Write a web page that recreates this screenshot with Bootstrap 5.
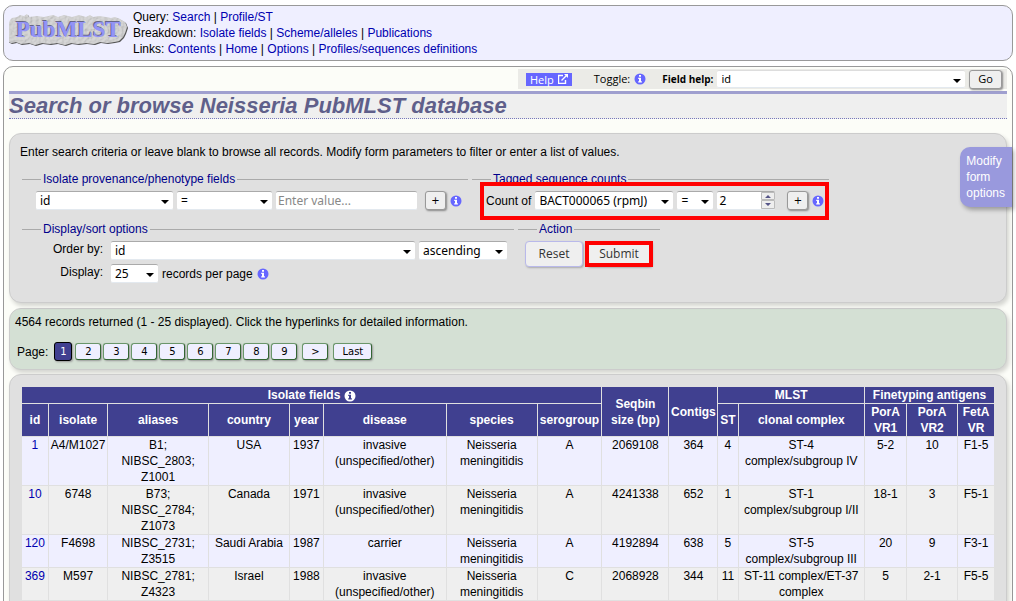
<!DOCTYPE html>
<html lang="en">
<head>
<meta charset="utf-8">
<meta name="viewport" content="width=device-width, initial-scale=1">
<title>PubMLST - Neisseria</title>
<link href="https://cdn.jsdelivr.net/npm/bootstrap@5.3.0/dist/css/bootstrap.min.css" rel="stylesheet">
<script src="https://cdn.jsdelivr.net/npm/bootstrap@5.3.0/dist/js/bootstrap.bundle.min.js" defer></script>
<style>
html,body{height:100%}
body{font:12px/16px "Liberation Sans",Arial,sans-serif;color:#000;background:#fff;overflow:hidden;padding:5px 3px 0}
a{color:#0000b0;text-decoration:none}
.site-head{background:#efefff;border:1px solid #999;border-radius:10px;padding:3px 5px}
.main-box{background:#fcfdf8;border:1px solid #999;border-radius:10px;margin-top:5px;padding:2px 5px 20px}
.helpbar{background:#ebebe7;font:11px/16px "Open Sans",sans-serif;width:49%;height:20px;margin-left:auto;padding:0 5px 0 8px}
.helpbar label{font-size:10px}
.help-link{background:#66f;color:#fff;padding:0 4px;line-height:13px;margin-right:22px}
.info{width:12px;height:12px;color:#66f;flex:none}
.title{font:italic bold 22px/24px "Liberation Sans",Arial,sans-serif;color:#5f5f8a;background:#efefef;border-top:3px solid #9f9fcf;border-bottom:1px dotted #77b;margin:2px 0 0}
.panel{border:1px solid #ccc;border-radius:12px;box-shadow:2px 3px 4px rgba(0,0,0,.16);background:#e0e0e0}
.query{margin-top:14px;padding:10px 10px 23px}
.query p{margin-bottom:11px}
.results{background:#d4e0d4;margin-top:5px;padding:5px 5px 8px}
.listing{margin-top:4px;padding:11px 11px 20px}
.sets{margin-left:2px}
fieldset{height:58px;margin:0;position:relative;border-top:1px solid #aaa}
legend{float:none;width:auto;font-size:12px;line-height:16px;height:16px;margin:0 0 4px 19px;padding:0 2px;color:#00008b}
.fields{padding-left:14px}
.ctl{font:12px/16px "Noto Sans",sans-serif;color:#000;border:0;border-top:1px solid #aaa;border-bottom:1px solid #e3e9ef;border-radius:2px;background:#fff;height:19px;padding:0 4px}
select.ctl{appearance:none;background:#fff url("data:image/svg+xml,%3Csvg xmlns='http://www.w3.org/2000/svg' viewBox='0 0 8 4'%3E%3Cpath d='M0 0h8L4 4z'/%3E%3C/svg%3E") no-repeat right 4px top 8px/8px 4px}
.helpbar .ctl{font-size:11px;height:18px;border-top-color:#ddd}
input.ctl{padding:0 2px;appearance:textfield}
input.ctl::-webkit-inner-spin-button{display:none}
.ctl::placeholder{color:#888}
.btn-mini{font:10px/14px "DejaVu Sans",sans-serif;border:1px solid #999;border-radius:3px;background:#efefef;color:#000;box-shadow:1px 1px 2px #888;height:19px;width:21px;padding:0}
.btn-go{font:11px/14px "Open Sans",sans-serif;width:33px}
.btn-act{font:12px/16px "Open Sans",sans-serif;color:#333;background:#efefef;border:1px solid #b9b9ea;border-radius:4px;box-shadow:1px 1px 2px #aaa;height:26px;padding:0}
.actions{gap:3px;padding-left:7px}
.w-reset{width:58px}.w-submit{width:66px}
.ring{border:4px solid red;position:absolute;pointer-events:none}
.ring-count{left:8px;right:0;top:-9px;height:38px}
.ring-submit{inset:0 -1px}
.tab{position:absolute;right:-6px;top:13px;padding:6px 7px 6px 6px;background:#99d;color:#fff;border-radius:10px 0 0 10px;box-shadow:2px 3px 4px rgba(0,0,0,.3)}
.pager{padding:4px 0 0 2px}
.pg{font:10px/14px "DejaVu Sans",sans-serif;background:#efefff;border:1px solid #6a966a;border-right-color:#363;border-bottom-color:#363;border-radius:3px;box-shadow:1px 1px 2px #999;height:17px;width:26px;padding:0;margin-right:2px;color:#000}
.pg.current{background:#404090;color:#fff;border-color:#000;width:18px;height:19px;margin:0 3px 0 6px}
.pg.jump{margin-left:3px}
.pg.final{width:39px}
.w-id{width:137px}.w-op{width:95px}.w-val{width:141px}.w-order{width:304px}.w-dir{width:88px}.w-num{width:47px}.w-locus{width:138px}.w-eq{width:36px}.w-count{width:58px}
.f-prov{width:446px}.f-tag{width:357px}.f-sort{width:492px}.f-act{width:142px}
.f-prov,.f-tag{height:50px}
.spin{position:absolute;right:0;top:1px}
.lbl{width:81px;text-align:right}
.records{width:100%;table-layout:fixed;border-collapse:separate;border-spacing:1px;text-align:center}
.records th,.records td{padding:0;line-height:16px;height:16px;vertical-align:top;white-space:nowrap}
.records th{background:#404090;color:#fff;vertical-align:middle;text-align:center}
.records tbody tr{background:#efefff}
.records tbody tr:nth-child(even){background:#efefef}
</style>
</head>
<body>
<svg width="0" height="0" class="position-absolute" aria-hidden="true">
<symbol id="info" viewBox="0 0 12 12"><circle cx="6" cy="6" r="5.500" fill="currentColor"/><path d="M5 2h2v1.700H5zM4.200 4.800H7v3.400h.9v1.300H4.200V8.200H5V6h-.8z" fill="#fff"/></symbol>
<symbol id="info-inv" viewBox="0 0 12 12"><circle cx="6" cy="6" r="5.500" fill="#fff"/><path d="M5 2h2v1.700H5zM4.200 4.800H7v3.400h.9v1.300H4.200V8.200H5V6h-.8z" fill="#404090"/></symbol>
</svg>

<header class="site-head d-flex">
<svg width="120" height="34" viewBox="0 0 120 34" class="flex-shrink-0 mt-1" role="img" aria-label="PubMLST">
<defs><filter id="stone" x="-5%" y="-10%" width="110%" height="125%"><feTurbulence type="fractalNoise" baseFrequency=".35" numOctaves="3" seed="4" result="n"/><feDiffuseLighting in="n" surfaceScale="1" lighting-color="#d8d8d8" result="l"><feDistantLight azimuth="225" elevation="68"/></feDiffuseLighting><feComposite in="l" in2="SourceGraphic" operator="in" result="t"/><feDropShadow in="t" dx="1" dy="1" stdDeviation=".5" flood-color="#555"/></filter></defs>
<path filter="url(#stone)" d="M1 7l2-2 5-1 3-2 4 1 3-2 2 3 8-1 7 1 9-2 5 2 6-2 8 2 7-2 7 2 4-2 3 2 6-1 7 1 5 1 4-1 5 2 5 3 2 5-2 6-2 4-4 4-5 1-7 1-7-1-6 2-8-1-8 1-7-1-6 2-8-2-7 1-8-1-7 2-6-2-8 1-5-2-5 1-4-2 2-4-3-4 1-5z"/>
<g font-family="'Liberation Serif',serif" font-weight="bold" font-size="23"><text x="6" y="23" fill="#66668a">PubMLST</text><text x="7" y="24" fill="#9393f6">PubMLST</text></g>
</svg>
<div class="ms-1">Query: <a href="#">Search</a> | <a href="#">Profile/ST</a><br>Breakdown: <a href="#">Isolate fields</a> | <a href="#">Scheme/alleles</a> | <a href="#">Publications</a><br>Links: <a href="#">Contents</a> | <a href="#">Home</a> | <a href="#">Options</a> | <a href="#">Profiles/sequences definitions</a></div>
</header>

<main class="main-box">
<form class="helpbar d-flex align-items-center">
<a href="#" class="help-link d-flex align-items-center gap-1">Help <svg width="10" height="10" viewBox="0 0 10 10" fill="none" stroke="#fff"><path d="M5 1.500H.5v8h7V6M3.500 6.500L9 1" stroke-width="1.400"/><path d="M6 0h4v4z" fill="#fff" stroke="none"/></svg></a>
<span>Toggle:</span><svg class="info ms-1"><use href="#info"/></svg>
<label for="fh" class="fw-bold ms-3 me-1 text-nowrap">Field help:</label>
<select id="fh" class="ctl flex-grow-1"><option>id</option></select>
<button type="button" class="btn-mini btn-go ms-1">Go</button>
</form>
<h1 class="title">Search or browse Neisseria PubMLST database</h1>

<form class="panel query position-relative">
<p>Enter search criteria or leave blank to browse all records. Modify form parameters to filter or enter a list of values.</p>
<div class="sets d-flex gap-1">
<fieldset class="f-prov"><legend>Isolate provenance/phenotype fields</legend>
<div class="fields d-flex align-items-center gap-1">
<select class="ctl w-id" aria-label="Field"><option>id</option></select>
<select class="ctl w-op" aria-label="Operator"><option>=</option></select>
<input class="ctl w-val" placeholder="Enter value..." aria-label="Value">
<button type="button" class="btn-mini ms-1">+</button><svg class="info"><use href="#info"/></svg>
</div></fieldset>
<fieldset class="f-tag"><legend>Tagged sequence counts</legend>
<div class="fields d-flex align-items-center gap-1">
<label for="locus" class="text-nowrap">Count of</label>
<select id="locus" class="ctl w-locus"><option>BACT000065 (rpmJ)</option></select>
<select class="ctl w-eq" aria-label="Comparison"><option>=</option></select>
<span class="position-relative d-flex"><input type="number" class="ctl w-count" value="2" aria-label="Count"><svg class="spin" width="14" height="17" viewBox="0 0 14 17"><path d="M.5.5h13v7H.5zM.5 8.500h13v8H.5z" fill="#eee" stroke="#bbb"/><path d="M4 6h6L7 3zM4 11h6l-3 3z" fill="#558"/></svg></span>
<button type="button" class="btn-mini ms-2">+</button><svg class="info"><use href="#info"/></svg>
</div>
<div class="ring ring-count"></div></fieldset>
</div>
<div class="sets d-flex gap-1">
<fieldset class="f-sort"><legend>Display/sort options</legend>
<div class="d-flex gap-1 mb-1"><label for="order" class="lbl me-1">Order by:</label><select id="order" class="ctl w-order"><option>id</option></select><select class="ctl w-dir" aria-label="Direction"><option>ascending</option></select></div>
<div class="d-flex gap-1"><label for="num" class="lbl me-1">Display:</label><select id="num" class="ctl w-num"><option>25</option></select><span class="d-flex align-items-center gap-1">records per page <svg class="info"><use href="#info"/></svg></span></div>
</fieldset>
<fieldset class="f-act"><legend>Action</legend>
<div class="actions d-flex"><button type="reset" class="btn-act w-reset">Reset</button><span class="position-relative d-flex"><button type="button" class="btn-act w-submit">Submit</button><span class="ring ring-submit"></span></span></div></fieldset>
</div>
<a href="#" class="tab">Modify<br>form<br>options</a>
</form>

<section class="panel results">
<p class="mb-2">4564 records returned (1 - 25 displayed). Click the hyperlinks for detailed information.</p>
<div class="pager d-flex align-items-center"><span>Page:</span>
<button class="pg current">1</button><button class="pg">2</button><button class="pg">3</button><button class="pg">4</button><button class="pg">5</button><button class="pg">6</button><button class="pg">7</button><button class="pg">8</button><button class="pg">9</button><button class="pg jump">&gt;</button><button class="pg jump final">Last</button></div>
</section>

<section class="panel listing">
<table class="records">
<colgroup><col style="width:2.700%"><col style="width:6.100%"><col style="width:10.400%"><col style="width:8.350%"><col style="width:3.450%"><col style="width:12.700%"><col style="width:9.400%"><col style="width:6.650%"><col style="width:6.900%"><col style="width:5%"><col style="width:2%"><col style="width:13.100%"><col style="width:4.300%"><col style="width:5.200%"><col></colgroup>
<thead>
<tr><th colspan="8">Isolate fields <svg class="info" width="12" height="12"><use href="#info-inv"/></svg></th><th rowspan="2">Seqbin<br>size (bp)</th><th rowspan="2">Contigs</th><th colspan="2">MLST</th><th colspan="3">Finetyping antigens</th></tr>
<tr><th>id</th><th>isolate</th><th>aliases</th><th>country</th><th>year</th><th>disease</th><th>species</th><th>serogroup</th><th>ST</th><th>clonal complex</th><th>PorA<br>VR1</th><th>PorA<br>VR2</th><th>FetA<br>VR</th></tr>
</thead>
<tbody>
<tr><td><a href="#">1</a></td><td>A4/M1027</td><td>B1;<br>NIBSC_2803;<br>Z1001</td><td>USA</td><td>1937</td><td>invasive<br>(unspecified/other)</td><td>Neisseria<br>meningitidis</td><td>A</td><td>2069108</td><td>364</td><td>4</td><td>ST-4<br>complex/subgroup IV</td><td>5-2</td><td>10</td><td>F1-5</td></tr>
<tr><td><a href="#">10</a></td><td>6748</td><td>B73;<br>NIBSC_2784;<br>Z1073</td><td>Canada</td><td>1971</td><td>invasive<br>(unspecified/other)</td><td>Neisseria<br>meningitidis</td><td>A</td><td>4241338</td><td>652</td><td>1</td><td>ST-1<br>complex/subgroup I/II</td><td>18-1</td><td>3</td><td>F5-1</td></tr>
<tr><td><a href="#">120</a></td><td>F4698</td><td>NIBSC_2731;<br>Z3515</td><td>Saudi Arabia</td><td>1987</td><td>carrier</td><td>Neisseria<br>meningitidis</td><td>A</td><td>4192894</td><td>638</td><td>5</td><td>ST-5<br>complex/subgroup III</td><td>20</td><td>9</td><td>F3-1</td></tr>
<tr><td><a href="#">369</a></td><td>M597</td><td>NIBSC_2781;<br>Z4323</td><td>Israel</td><td>1988</td><td>invasive<br>(unspecified/other)</td><td>Neisseria<br>meningitidis</td><td>C</td><td>2068928</td><td>344</td><td>11</td><td>ST-11 complex/ET-37<br>complex</td><td>5</td><td>2-1</td><td>F5-5</td></tr>
</tbody>
</table>
</section>
</main>
</body>
</html>
